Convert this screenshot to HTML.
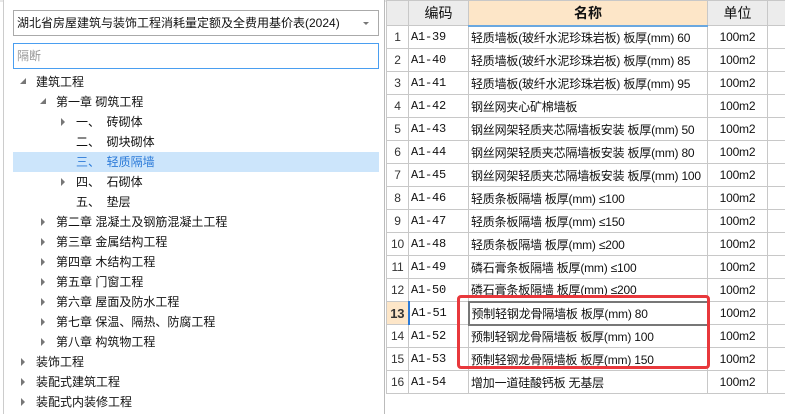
<!DOCTYPE html>
<html><head><meta charset="utf-8"><style>
*{margin:0;padding:0;box-sizing:border-box}
body{width:785px;height:414px;overflow:hidden;background:#fff;font-family:"Liberation Sans","Noto Sans CJK SC",sans-serif;position:relative}
.left{position:absolute;left:3px;top:0;width:382px;height:414px;border-left:1px solid #ccc;border-right:1px solid #bbb;background:#fff}
.dd{position:absolute;left:9px;top:10px;width:366px;height:26px;border:1px solid #aaa;font-size:12px;line-height:24px;padding-left:3px;color:#111}
.dd:after{content:"";position:absolute;right:9px;top:11px;border:3px solid transparent;border-top:3px solid #777}
.sr{position:absolute;left:9px;top:43px;width:366px;height:26px;border:1px solid #4a9ef0;font-size:12px;line-height:24px;padding-left:3px;color:#999}
.t{position:absolute;font-size:12px;height:20px;line-height:20px;color:#111;white-space:pre}
.tri{position:absolute;width:0;height:0;border:4px solid transparent;border-left:4px solid #777}
.open{position:absolute;width:0;height:0;border-left:6px solid transparent;border-bottom:6px solid #777}
.hl{position:absolute;left:9px;top:152px;width:366px;height:20px;background:#cce5fb}
table{position:absolute;left:386px;top:0;border-collapse:collapse;font-size:12px;letter-spacing:-0.2px;color:#111;table-layout:fixed;width:400px}
td{border:1px solid #c8c8c8;height:23px;padding:0 2px;white-space:nowrap;overflow:hidden}
th{height:25px;background:#ececec;border:1px solid #c8c8c8;font-weight:normal;font-size:14px;letter-spacing:0}
th.n{background:#fde6c8;font-weight:bold;border-bottom:2px solid #6aa8e0}
td.i{text-align:center;color:#333;font-size:12px}
td.c{font-family:"Liberation Mono","Noto Sans CJK SC",monospace;font-size:12px}
td.u{text-align:center;font-size:12px}
.box{position:absolute;left:457px;top:295px;width:253px;height:74px;border:3px solid #e8383c;border-radius:4px}
</style></head><body>
<div style="position:absolute;left:0;top:0;width:785px;height:2px;background:#e8e8e8"></div>
<div style="position:absolute;left:243px;top:0;width:78px;height:2px;background:#5aa0e8"></div>
<div class="left">
<div class="dd">湖北省房屋建筑与装饰工程消耗量定额及全费用基价表(2024)</div>
<div class="sr">隔断</div>
<div class="hl"></div>
<div class="open" style="left:16px;top:78px"></div><div class="t" style="left:32px;top:72px">建筑工程</div>
<div class="open" style="left:36px;top:98px"></div><div class="t" style="left:52px;top:92px">第一章 砌筑工程</div>
<div class="tri" style="left:57px;top:118px"></div><div class="t" style="left:72px;top:112px">一、  砖砌体</div>
<div class="t" style="left:72px;top:132px">二、  砌块砌体</div>
<div class="t" style="left:72px;top:152px;color:#2b7ad8">三、  轻质隔墙</div>
<div class="tri" style="left:57px;top:178px"></div><div class="t" style="left:72px;top:172px">四、  石砌体</div>
<div class="t" style="left:72px;top:192px">五、  垫层</div>
<div class="tri" style="left:37px;top:218px"></div><div class="t" style="left:52px;top:212px">第二章 混凝土及钢筋混凝土工程</div>
<div class="tri" style="left:37px;top:238px"></div><div class="t" style="left:52px;top:232px">第三章 金属结构工程</div>
<div class="tri" style="left:37px;top:258px"></div><div class="t" style="left:52px;top:252px">第四章 木结构工程</div>
<div class="tri" style="left:37px;top:278px"></div><div class="t" style="left:52px;top:272px">第五章 门窗工程</div>
<div class="tri" style="left:37px;top:298px"></div><div class="t" style="left:52px;top:292px">第六章 屋面及防水工程</div>
<div class="tri" style="left:37px;top:318px"></div><div class="t" style="left:52px;top:312px">第七章 保温、隔热、防腐工程</div>
<div class="tri" style="left:37px;top:338px"></div><div class="t" style="left:52px;top:332px">第八章 构筑物工程</div>
<div class="tri" style="left:17px;top:358px"></div><div class="t" style="left:32px;top:352px">装饰工程</div>
<div class="tri" style="left:17px;top:378px"></div><div class="t" style="left:32px;top:372px">装配式建筑工程</div>
<div class="tri" style="left:17px;top:398px"></div><div class="t" style="left:32px;top:392px">装配式内装修工程</div>
</div>
<table>
<colgroup><col style="width:22px"><col style="width:60px"><col style="width:239px"><col style="width:60px"><col style="width:19px"></colgroup>
<tr><th></th><th>编码</th><th class="n">名称</th><th>单位</th><th></th></tr>
<tr><td class="i">1</td><td class="c">A1-39</td><td>轻质墙板(玻纤水泥珍珠岩板) 板厚(mm) 60</td><td class="u">100m2</td><td></td></tr>
<tr><td class="i">2</td><td class="c">A1-40</td><td>轻质墙板(玻纤水泥珍珠岩板) 板厚(mm) 85</td><td class="u">100m2</td><td></td></tr>
<tr><td class="i">3</td><td class="c">A1-41</td><td>轻质墙板(玻纤水泥珍珠岩板) 板厚(mm) 95</td><td class="u">100m2</td><td></td></tr>
<tr><td class="i">4</td><td class="c">A1-42</td><td>钢丝网夹心矿棉墙板</td><td class="u">100m2</td><td></td></tr>
<tr><td class="i">5</td><td class="c">A1-43</td><td>钢丝网架轻质夹芯隔墙板安装 板厚(mm) 50</td><td class="u">100m2</td><td></td></tr>
<tr><td class="i">6</td><td class="c">A1-44</td><td>钢丝网架轻质夹芯隔墙板安装 板厚(mm) 80</td><td class="u">100m2</td><td></td></tr>
<tr><td class="i">7</td><td class="c">A1-45</td><td>钢丝网架轻质夹芯隔墙板安装 板厚(mm) 100</td><td class="u">100m2</td><td></td></tr>
<tr><td class="i">8</td><td class="c">A1-46</td><td>轻质条板隔墙 板厚(mm) ≤100</td><td class="u">100m2</td><td></td></tr>
<tr><td class="i">9</td><td class="c">A1-47</td><td>轻质条板隔墙 板厚(mm) ≤150</td><td class="u">100m2</td><td></td></tr>
<tr><td class="i">10</td><td class="c">A1-48</td><td>轻质条板隔墙 板厚(mm) ≤200</td><td class="u">100m2</td><td></td></tr>
<tr><td class="i">11</td><td class="c">A1-49</td><td>磷石膏条板隔墙 板厚(mm) ≤100</td><td class="u">100m2</td><td></td></tr>
<tr><td class="i">12</td><td class="c">A1-50</td><td>磷石膏条板隔墙 板厚(mm) ≤200</td><td class="u">100m2</td><td></td></tr>
<tr><td class="i" style="background:#fde6c8;font-weight:bold;font-size:13px;border-right:2px solid #2b7ad8">13</td><td class="c">A1-51</td><td style="border:2px solid #777">预制轻钢龙骨隔墙板 板厚(mm) 80</td><td class="u">100m2</td><td></td></tr>
<tr><td class="i">14</td><td class="c">A1-52</td><td>预制轻钢龙骨隔墙板 板厚(mm) 100</td><td class="u">100m2</td><td></td></tr>
<tr><td class="i">15</td><td class="c">A1-53</td><td>预制轻钢龙骨隔墙板 板厚(mm) 150</td><td class="u">100m2</td><td></td></tr>
<tr><td class="i">16</td><td class="c">A1-54</td><td>增加一道硅酸钙板 无基层</td><td class="u">100m2</td><td></td></tr>
</table>
<div class="box"></div>
</body></html>
